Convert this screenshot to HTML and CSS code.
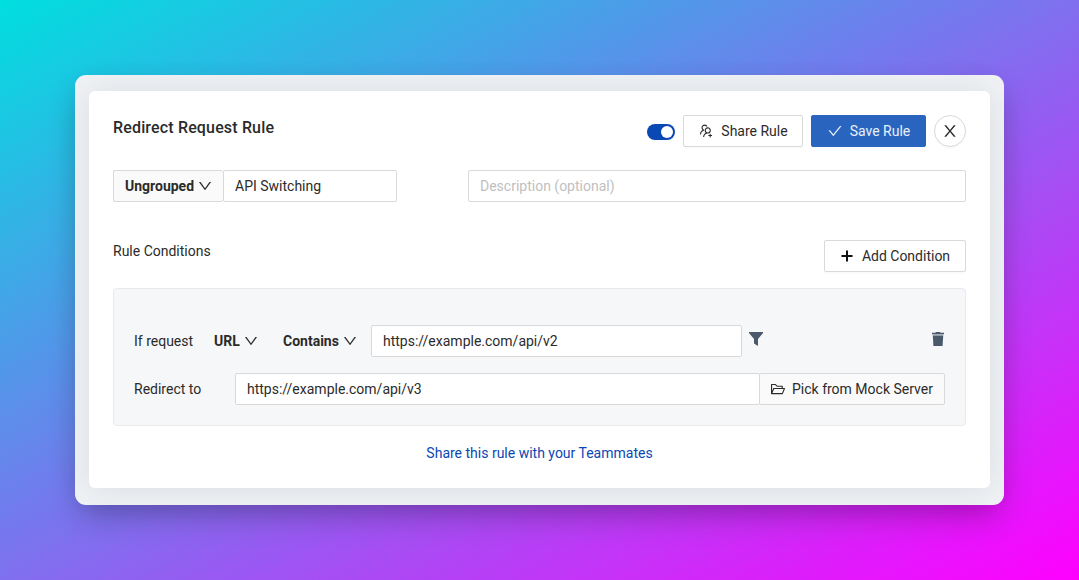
FILE: index.html
```html
<!DOCTYPE html>
<html lang="en">
<head>
<meta charset="utf-8">
<title>Redirect Request Rule</title>
<link rel="stylesheet" href="styles.css">
</head>
<body>
<svg class="sprite" aria-hidden="true">
  <symbol id="down" viewBox="0 0 1024 1024"><path d="M884 256h-75c-5.1 0-9.9 2.5-12.9 6.6L512 654.2 227.9 262.6c-3-4.1-7.8-6.6-12.9-6.6h-75c-6.5 0-10.3 7.4-6.5 12.7l352.6 486.1c12.8 17.6 39 17.6 51.7 0l352.6-486.1c3.9-5.3.1-12.7-6.4-12.7z"/></symbol>
</svg>
<div class="frame">
  <main class="panel">
    <header class="header">
      <h1 class="title">Redirect Request Rule</h1>
      <div class="actions">
        <span class="switch"></span>
        <button class="btn share">
          <svg class="icon" viewBox="0 0 1024 1024"><path d="M892 772h-80v-80c0-4.400-3.600-8-8-8h-48c-4.400 0-8 3.600-8 8v80h-80c-4.400 0-8 3.600-8 8v48c0 4.400 3.600 8 8 8h80v80c0 4.400 3.600 8 8 8h48c4.400 0 8-3.600 8-8v-80h80c4.400 0 8-3.600 8-8v-48c0-4.400-3.600-8-8-8zM373.500 498.400c-.9-8.700-1.400-17.500-1.400-26.400 0-15.900 1.500-31.400 4.300-46.500.7-3.600-1.200-7.300-4.500-8.800-13.600-6.100-26.100-14.500-36.900-25.100a127.540 127.540 0 01-38.700-95.400c.9-32.100 13.800-62.600 36.300-85.600 24.700-25.300 57.900-39.100 93.200-38.700 31.900.3 62.700 12.600 86 34.400 7.900 7.400 14.700 15.600 20.400 24.400 2 3.100 5.900 4.400 9.300 3.200 17.600-6.100 36.200-10.400 55.300-12.400 5.600-.6 8.800-6.600 6.300-11.600-32.500-64.300-98.900-108.700-175.700-109.900-110.800-1.700-203.200 89.200-203.200 200 0 62.800 28.900 118.800 74.200 155.500-31.800 14.700-61.100 35-86.500 60.400-54.800 54.700-85.800 126.900-87.800 204a8 8 0 008 8.200h56.100c4.300 0 7.900-3.400 8-7.700 1.900-58 25.400-112.300 66.700-153.500 29.400-29.400 65.400-49.800 104.700-59.700 3.900-1 6.500-4.700 6-8.700zM824 472c0-109.400-87.900-198.300-196.900-200C516.300 270.300 424 361.200 424 472c0 62.800 29 118.800 74.200 155.500a300.950 300.950 0 00-86.400 60.400C357 742.600 326 814.800 324 891.800a8 8 0 008 8.200h56c4.300 0 7.900-3.400 8-7.700 1.900-58 25.400-112.300 66.700-153.500C505.800 695.700 563 672 624 672c110.400 0 200-89.500 200-200zm-109.500 90.500C690.300 586.700 658.200 600 624 600s-66.300-13.300-90.500-37.500a127.260 127.260 0 01-37.500-91.800c.3-32.800 13.400-64.500 36.300-88 24-24.600 56.100-38.300 90.400-38.700 33.900-.3 66.800 12.900 91 36.600 24.800 24.300 38.400 56.800 38.400 91.400-.1 34.200-13.400 66.300-37.600 90.500z"/></svg>
          Share Rule
        </button>
        <button class="btn save">
          <svg class="icon" viewBox="0 0 1024 1024"><path d="M912 190h-69.900c-9.800 0-19.100 4.500-25.100 12.200L404.700 724.500 207 474a32 32 0 00-25.100-12.200H112c-6.700 0-10.400 7.700-6.300 12.900l273.900 347c12.800 16.200 37.400 16.200 50.300 0l488.400-618.900c4.100-5.100.4-12.800-6.300-12.800z"/></svg>
          Save Rule
        </button>
        <button class="btn close" aria-label="Close">
          <svg viewBox="0 0 1024 1024"><path d="M563.800 512l262.500-312.900c4.400-5.200.7-13.100-6.100-13.100h-79.800c-4.700 0-9.200 2.100-12.300 5.700L511.600 449.800 295.100 191.700c-3-3.600-7.500-5.700-12.300-5.700H203c-6.800 0-10.500 7.900-6.100 13.100L459.400 512 196.900 824.900A7.950 7.950 0 00203 838h79.800c4.700 0 9.200-2.100 12.300-5.700l216.500-258.100 216.500 258.100c3 3.600 7.500 5.700 12.300 5.700h79.800c6.800 0 10.500-7.900 6.100-13.100L563.800 512z"/></svg>
        </button>
      </div>
    </header>

    <div class="details">
      <div class="group name">
        <span class="addon"><b>Ungrouped</b><svg class="icon"><use href="#down"/></svg></span>
        <span class="field">API Switching</span>
      </div>
      <span class="field description">Description (optional)</span>
    </div>

    <div class="section">
      <h2 class="section-title">Rule Conditions</h2>
      <button class="btn add">
        <svg class="plus" viewBox="0 0 12 12"><path d="M5 .5h2V5h4.500v2H7v4.500H5V7H.5V5H5z"/></svg>
        Add Condition
      </button>
    </div>

    <section class="conditions">
      <div class="row">
        <span class="label">If request</span>
        <span class="dropdown source"><b>URL</b><svg class="icon"><use href="#down"/></svg></span>
        <span class="dropdown operator"><b>Contains</b><svg class="icon"><use href="#down"/></svg></span>
        <span class="field match">https://example.com/api/v2</span>
        <svg class="filter" viewBox="0 0 14 14"><path d="M0 0h14v1L9 7v7L5 11.500V7L0 1z"/></svg>
        <svg class="trash" viewBox="0 0 12 14"><path d="M4 0h4l.6.8H12v1.500H0V.8h3.400z"/><path d="M.8 3.400h10.400L10.600 14H1.400z"/><path class="lid" d="M.6 2.300h10.800v1.100H.6z"/></svg>
      </div>
      <div class="row">
        <span class="label redirect">Redirect to</span>
        <div class="group destination">
          <span class="field">https://example.com/api/v3</span>
          <span class="addon pick"><svg class="icon" viewBox="0 0 1024 1024"><path d="M928 444H820V330.400c0-17.700-14.300-32-32-32H473L355.700 186.200a8.150 8.150 0 00-5.500-2.200H96c-17.700 0-32 14.300-32 32v592c0 17.700 14.300 32 32 32h698c13 0 24.800-7.900 29.700-20l134-332c1.500-3.800 2.300-7.900 2.300-12 0-17.700-14.300-32-32-32zM136 256h188.500l119.600 114.400H748V444H238c-13 0-24.800 7.900-29.700 20L136 643.200V256zm635.300 512H159l103.300-256h612.400L771.300 768z"/></svg>Pick from Mock Server</span>
        </div>
      </div>
    </section>

    <a class="share-link">Share this rule with your Teammates</a>
  </main>
</div>
</body>
</html>
```
FILE: styles.css
```css
* { box-sizing: border-box; }

body {
  margin: 0;
  height: 580px;
  padding: 75px;
  overflow: hidden;
  background: linear-gradient(to bottom right, #00dfdf, #ff00ff);
  color: #2b2b2b;
  font: 14px/22px Roboto, sans-serif;
}

.sprite { display: none; }
svg { display: block; flex: none; fill: currentColor; }
b { font-weight: 700; }
h1, h2 { margin: 0; }

.frame {
  width: 929px;
  height: 430px;
  padding: 16px 14px 17px;
  border-radius: 11px;
  background: #f0f2f5;
  box-shadow: 0 14px 32px -6px rgba(0, 0, 0, .3);
}

.panel {
  display: flex;
  flex-direction: column;
  height: 397px;
  padding: 24px;
  border-radius: 6px;
  background: #fff;
  box-shadow: 0 1px 32px rgba(69, 90, 100, .13);
}

.header { display: flex; justify-content: space-between; height: 32px; }
.title { padding-top: 2px; font-size: 16px; font-weight: 500; line-height: 22px; letter-spacing: .16px; }
.actions { display: flex; align-items: center; gap: 8px; }

.switch {
  display: flex;
  justify-content: flex-end;
  width: 28px;
  height: 16px;
  margin-top: 2px;
  padding: 2px;
  border-radius: 8px;
  background: #0a48b3;
}
.switch::after { content: ""; width: 12px; height: 12px; border-radius: 50%; background: #fff; }

.btn {
  display: flex;
  align-items: center;
  justify-content: center;
  gap: 7px;
  height: 32px;
  padding: 0;
  border: 1px solid #d9d9d9;
  border-radius: 2px;
  background: #fff;
  color: #2b2b2b;
  font: inherit;
  box-shadow: 0 2px 0 rgba(0, 0, 0, .016);
}
.icon { width: 16px; height: 16px; }
.share { width: 120px; }
.save { width: 115px; border-color: #2965bf; background: #2965bf; color: #e9f0f9; }
.close { width: 32px; border-radius: 50%; }
.close svg { width: 18px; height: 18px; }

.details { display: flex; justify-content: space-between; margin-top: 23px; }
.group { display: flex; }
.name { width: 284px; }
.description { width: 498px; color: #bfbfbf; }

.field {
  height: 32px;
  padding: 4px 11px;
  border: 1px solid #d9d9d9;
  border-radius: 2px;
  background: #fff;
  white-space: nowrap;
}
.group .field { flex: 1; }

.addon {
  display: flex;
  align-items: center;
  gap: 3px;
  height: 32px;
  border: 1px solid #d9d9d9;
  border-radius: 2px;
  background: #fafafa;
}
.name .addon { width: 110px; padding-left: 11px; border-right: 0; }

.section { display: flex; justify-content: space-between; margin-top: 38px; }
.section-title { font-size: 14px; font-weight: 400; line-height: 22px; }
.add { width: 142px; gap: 8px; padding-left: 1px; }
.plus { width: 12px; height: 12px; margin-right: 1px; color: #111; }

.conditions {
  display: flex;
  flex-direction: column;
  gap: 16px;
  height: 138px;
  margin-top: 16px;
  padding: 36px 20px 0;
  border: 1px solid #e8eaee;
  border-radius: 4px;
  background: #f6f7f9;
}
.row { display: flex; align-items: center; }
.label { width: 80px; }
.redirect { width: 101px; }
.dropdown { display: flex; align-items: center; gap: 3px; }
.source { width: 69px; }
.operator { width: 88px; }
.match { width: 371px; }
.filter { width: 14px; height: 14px; margin: -4px 0 0 7px; color: #4b5a6b; }
.trash { width: 12px; height: 14px; margin: -4px 1px 0 auto; color: #4b5a6b; }
.lid { opacity: .4; }

.destination { width: 710px; }
.pick { width: 186px; margin-left: -1px; padding-left: 10px; gap: 6px; }

.share-link { align-self: center; margin-top: 16px; color: #0a48b3; }
```
